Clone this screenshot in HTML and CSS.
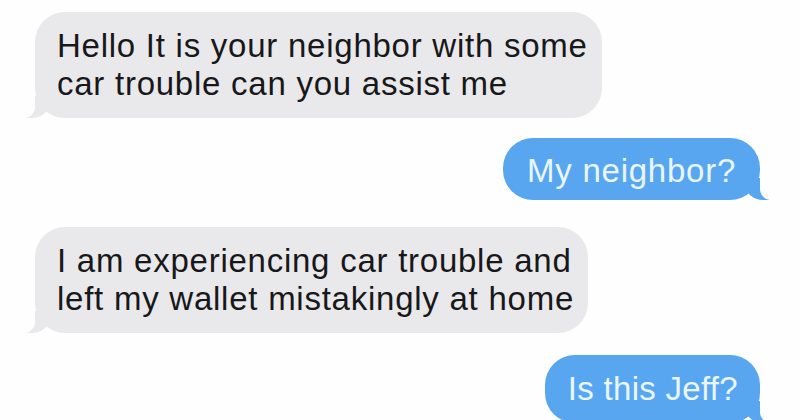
FILE: index.html
```html
<!DOCTYPE html>
<html lang="en">
<head>
<meta charset="utf-8">
<title>Messages</title>
<link rel="stylesheet" href="styles.css">
</head>
<body>
<div class="chat">
  <div class="msg in m1">Hello It is your neighbor with some<br>car trouble can you assist me</div>
  <div class="msg out m2">My neighbor?</div>
  <div class="msg in m3">I am experiencing car trouble and<br>left my wallet mistakingly at home</div>
  <div class="msg out m4">Is this Jeff?</div>
</div>
</body>
</html>
```
FILE: styles.css
```css
html, body {
  margin: 0;
  padding: 0;
  background: #fefefe;
  width: 800px;
  height: 420px;
  overflow: hidden;
}

.chat {
  display: flex;
  flex-direction: column;
  align-items: flex-start;
  padding: 12px 40px 0 35px;
  font-family: "Liberation Sans", Arial, sans-serif;
  font-size: 33px;
  line-height: 38px;
  letter-spacing: 0.75px;
}

.msg {
  position: relative;
  border-radius: 30px;
  white-space: nowrap;
}

.in {
  background: #e9e9eb;
  color: #18181a;
  padding: 15px 14px 15px 22px;
}

.out {
  align-self: flex-end;
  background: #58a6f0;
  color: #e9f6ff;
  padding: 14px 24px 10px 24px;
}

.m2 { margin-top: 20px; }
.m3 { margin-top: 27px; }
.m4 {
  margin-top: 22px;
  padding: 15px 22px 15px 23px;
  letter-spacing: 0.3px;
}

.in::before,
.in::after,
.out::before,
.out::after {
  content: "";
  position: absolute;
  bottom: 0;
  height: 22px;
}

.in::before {
  left: -9px;
  width: 24px;
  background: #e9e9eb;
  border-bottom-right-radius: 18px 16px;
}

.in::after {
  left: -12px;
  width: 12px;
  background: #fefefe;
  border-bottom-right-radius: 11px;
}

.out::before {
  right: -9px;
  width: 24px;
  background: #58a6f0;
  border-bottom-left-radius: 18px 16px;
}

.out::after {
  right: -12px;
  width: 12px;
  background: #fefefe;
  border-bottom-left-radius: 11px;
}
```
